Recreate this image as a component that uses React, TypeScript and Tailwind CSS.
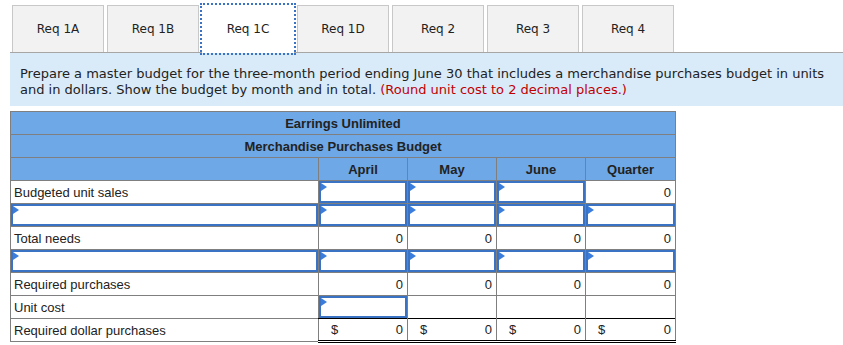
import React from "react";

const tabs = ["Req 1A", "Req 1B", "Req 1C", "Req 1D", "Req 2", "Req 3", "Req 4"];

function Flag() {
  return (
    <svg width="6" height="8" viewBox="0 0 6 8" className="absolute left-0 top-0">
      <path d="M0 0L6 4L0 8Z" fill="#3b7ddd" />
    </svg>
  );
}

function InputCell() {
  return (
    <td className="border border-[#7f7f7f] p-0 h-[23px]">
      <div className="relative h-[22px] border-2 border-[#3a72c4] bg-white">
        <Flag />
      </div>
    </td>
  );
}

function ValueCell({ value, dollar = false, top = false, double = false }: { value?: string; dollar?: boolean; top?: boolean; double?: boolean }) {
  return (
    <td
      className={`border border-[#7f7f7f] pr-[4px] pl-[12px] h-[23px] ${top ? "border-t-black" : ""} ${double ? "border-b-[3px] border-b-black border-double" : ""}`}
    >
      <div className="flex justify-between">
        <span>{dollar ? "$" : ""}</span>
        <span>{value}</span>
      </div>
    </td>
  );
}

export default function App() {
  return (
    <div className="w-[843px] h-[345px] bg-white pt-[4px] text-[#222]">
      {/* Tabs */}
      <div className="flex gap-[3px] ml-[10px] pl-[2px] border-b border-[#a6a6a6]">
        {tabs.map((t) => (
          <div
            key={t}
            className={
              t === "Req 1C"
                ? "relative w-[92px] h-[48px] mt-[1px] -mb-px flex items-center justify-center bg-white outline-2 outline-dotted outline-[#3a72c4] text-[12px] text-[#222]"
                : "w-[92px] h-[47px] mt-[1px] flex items-center justify-center bg-[#f2f2f2] border border-b-0 border-[#c8c8c8] text-[12px] text-[#222]"
            }
            style={{ fontFamily: '"DejaVu Sans", Verdana, sans-serif' }}
          >
            {t}
          </div>
        ))}
      </div>

      {/* Instructions */}
      <div
        className="ml-[10px] bg-[#d9ebf9] px-[10px] pt-[13px] pb-[8px] text-[13px] leading-[16px] text-[#222]"
        style={{ fontFamily: '"DejaVu Sans", Verdana, sans-serif' }}
      >
        Prepare a master budget for the three-month period ending June 30 that includes a merchandise purchases budget in units and in dollars. Show the budget by month and in total.{" "}
        <span className="text-[#c00000]">(Round unit cost to 2 decimal places.)</span>
      </div>

      {/* Table */}
      <table
        className="ml-[10px] mt-[5px] border-collapse table-fixed text-[13px] leading-[15px]"
        style={{ fontFamily: '"Liberation Sans", Arial, sans-serif' }}
      >
        <colgroup>
          <col className="w-[308px]" />
          <col className="w-[89px]" />
          <col className="w-[89px]" />
          <col className="w-[89px]" />
          <col className="w-[90px]" />
        </colgroup>
        <tbody>
          <tr className="bg-[#6ea8e6] font-bold">
            <td colSpan={5} className="border border-[#7f7f7f] h-[23px] text-center">Earrings Unlimited</td>
          </tr>
          <tr className="bg-[#6ea8e6] font-bold">
            <td colSpan={5} className="border border-[#7f7f7f] h-[23px] text-center">Merchandise Purchases Budget</td>
          </tr>
          <tr className="bg-[#6ea8e6] font-bold">
            <td className="border border-[#7f7f7f] h-[23px]"></td>
            <td className="border border-[#7f7f7f] text-center">April</td>
            <td className="border border-[#7f7f7f] text-center">May</td>
            <td className="border border-[#7f7f7f] text-center">June</td>
            <td className="border border-[#7f7f7f] text-center">Quarter</td>
          </tr>
          <tr>
            <td className="border border-[#7f7f7f] h-[23px] px-[3px]">Budgeted unit sales</td>
            <InputCell />
            <InputCell />
            <InputCell />
            <ValueCell value="0" />
          </tr>
          <tr>
            <InputCell />
            <InputCell />
            <InputCell />
            <InputCell />
            <InputCell />
          </tr>
          <tr>
            <td className="border border-[#7f7f7f] h-[23px] px-[3px]">Total needs</td>
            <ValueCell value="0" />
            <ValueCell value="0" />
            <ValueCell value="0" />
            <ValueCell value="0" />
          </tr>
          <tr>
            <InputCell />
            <InputCell />
            <InputCell />
            <InputCell />
            <InputCell />
          </tr>
          <tr>
            <td className="border border-[#7f7f7f] h-[23px] px-[3px]">Required purchases</td>
            <ValueCell value="0" top />
            <ValueCell value="0" top />
            <ValueCell value="0" top />
            <ValueCell value="0" top />
          </tr>
          <tr>
            <td className="border border-[#7f7f7f] h-[23px] px-[3px]">Unit cost</td>
            <InputCell />
            <ValueCell />
            <ValueCell />
            <ValueCell />
          </tr>
          <tr>
            <td className="border border-[#7f7f7f] h-[23px] px-[3px]">Required dollar purchases</td>
            <ValueCell value="0" dollar top double />
            <ValueCell value="0" dollar top double />
            <ValueCell value="0" dollar top double />
            <ValueCell value="0" dollar top double />
          </tr>
        </tbody>
      </table>
    </div>
  );
}
